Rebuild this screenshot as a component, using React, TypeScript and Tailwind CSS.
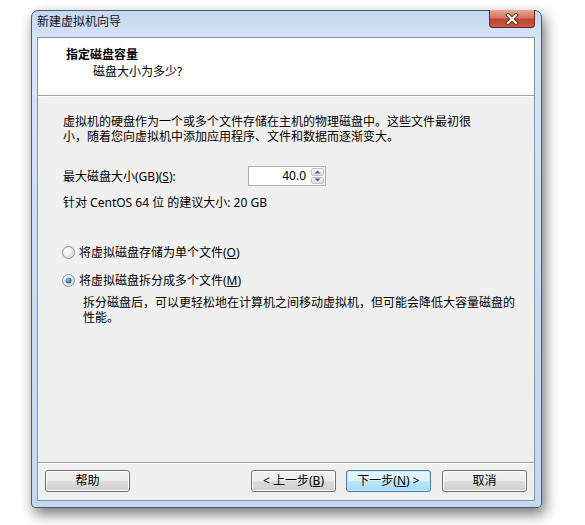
import React from "react";

const FONT = { fontFamily: '"Noto Sans", "Noto Sans CJK SC", sans-serif' };

function Btn({ children, primary }: { children: React.ReactNode; primary?: boolean }) {
  return (
    <button
      className={
        "w-[85px] h-[22px] rounded-[3px] border text-[12px] leading-[16px] text-black flex items-center justify-center " +
        (primary
          ? "border-[#3c7fb1] bg-[linear-gradient(to_bottom,#eaf6fd_0%,#d9f0fc_50%,#bee6fd_50%,#a7d9f5_100%)] shadow-[inset_0_0_0_1px_#cbe9fb]"
          : "border-[#707070] bg-[linear-gradient(to_bottom,#f2f2f2_0%,#ebebeb_50%,#dddddd_50%,#cfcfcf_100%)] shadow-[inset_0_0_0_1px_#fcfcfc]")
      }
    >
      {children}
    </button>
  );
}

function Radio({ checked }: { checked?: boolean }) {
  return (
    <svg width="13" height="13" viewBox="0 0 13 13" className="shrink-0">
      <defs>
        <radialGradient id="rb" cx="0.35" cy="0.35" r="0.8">
          <stop offset="0" stopColor="#ffffff" />
          <stop offset="1" stopColor="#d6d6d6" />
        </radialGradient>
        <radialGradient id="rd" cx="0.4" cy="0.35" r="0.7">
          <stop offset="0" stopColor="#8ad4f7" />
          <stop offset="0.6" stopColor="#2b7cc7" />
          <stop offset="1" stopColor="#1b4f8f" />
        </radialGradient>
      </defs>
      <circle cx="6.5" cy="6.5" r="6" fill="url(#rb)" stroke="#8e8f8f" strokeWidth="1" />
      {checked && <circle cx="6.5" cy="6.5" r="3" fill="url(#rd)" />}
    </svg>
  );
}

export default function App() {
  return (
    <div className="w-[585px] h-[525px] bg-white pt-[10px] overflow-hidden text-black" style={FONT}>
      <div className="ml-[31px] w-[511px] h-[498px] rounded-t-[7px] rounded-b-[4px] border border-[#4b5b6e] bg-[linear-gradient(to_bottom,#c3d7ef_0%,#d8e6f6_6%,#cadcf1_60%,#c4d8f0_100%)] pl-[5px] pr-[6px] pb-[6px] flex flex-col shadow-[3px_6px_14px_rgba(0,0,0,0.55)]">
        <div className="h-[26px] flex justify-between items-start shrink-0">
          <span className="mt-[3px] text-[12px] leading-[16px] text-[#111]">新建虚拟机向导</span>
          <div className="-mt-px w-[46px] h-[18px] rounded-b-[4px] border border-[#5b2a22] border-t-0 bg-[linear-gradient(to_bottom,#e8a595_0%,#d87563_45%,#c2432f_55%,#c95a45_100%)] flex items-center justify-center">
            <svg width="14" height="12" viewBox="0 0 14 12">
              <path d="M3 2 L11 10 M11 2 L3 10" stroke="#5a2a22" strokeWidth="4" strokeLinecap="square" />
              <path d="M3 2 L11 10 M11 2 L3 10" stroke="#ffffff" strokeWidth="2.2" strokeLinecap="square" />
            </svg>
          </div>
        </div>
        <div className="flex-1 border border-[#8395ab] bg-[#f0f0f0] flex flex-col min-h-0">
          <div className="h-[58px] bg-white border-b border-[#a0a0a0] pt-[9px] shrink-0">
            <div className="pl-[28px] text-[12px] leading-[16px] font-bold">指定磁盘容量</div>
            <div className="pl-[55px] mt-px text-[12px] leading-[16px]">磁盘大小为多少?</div>
          </div>
          <div className="flex-1 border-t border-white pl-[25px] pt-[17px] text-[12px] leading-[15px]">
            <p>虚拟机的硬盘作为一个或多个文件存储在主机的物理磁盘中。这些文件最初很</p>
            <p>小，随着您向虚拟机中添加应用程序、文件和数据而逐渐变大。</p>
            <div className="mt-[22px] flex items-center h-[20px]">
              <span className="w-[185px]">
                最大磁盘大小(GB)(<span className="underline">S</span>):
              </span>
              <div className="flex h-[20px] w-[78px] border border-[#abadb3] border-t-[#abadb3] bg-white">
                <span className="flex-1 text-right pr-[4px] leading-[18px]">40.0</span>
                <div className="w-[15px] flex flex-col gap-px p-px">
                  <div className="flex-1 border border-[#b8c4d3] rounded-[2px] bg-[linear-gradient(to_bottom,#f6f6f6,#dde1e6)] flex items-center justify-center">
                    <svg width="7" height="4" viewBox="0 0 7 4"><path d="M0.5 3.5 L3.5 0.5 L6.5 3.5 Z" fill="#4d6185" /></svg>
                  </div>
                  <div className="flex-1 border border-[#b8c4d3] rounded-[2px] bg-[linear-gradient(to_bottom,#f6f6f6,#dde1e6)] flex items-center justify-center">
                    <svg width="7" height="4" viewBox="0 0 7 4"><path d="M0.5 0.5 L3.5 3.5 L6.5 0.5 Z" fill="#4d6185" /></svg>
                  </div>
                </div>
              </div>
            </div>
            <p className="mt-[9px]">针对 CentOS 64 位 的建议大小: 20 GB</p>
            <div className="mt-[35px] flex items-center gap-[4px] -ml-[1px]">
              <Radio />
              <span>
                将虚拟磁盘存储为单个文件(<span className="underline">O</span>)
              </span>
            </div>
            <div className="mt-[13px] flex items-center gap-[4px] -ml-[1px]">
              <Radio checked />
              <span>
                将虚拟磁盘拆分成多个文件(<span className="underline">M</span>)
              </span>
            </div>
            <div className="mt-[7px] pl-[20px]">
              <p>拆分磁盘后，可以更轻松地在计算机之间移动虚拟机，但可能会降低大容量磁盘的</p>
              <p>性能。</p>
            </div>
          </div>
          <div className="h-[38px] shrink-0 border-t border-[#a0a0a0] shadow-[inset_0_1px_0_#ffffff] pt-[7px] pl-[7px] pr-[7px] flex">
            <Btn>帮助</Btn>
            <div className="flex-1" />
            <Btn>
              &lt; 上一步(<span className="underline">B</span>)
            </Btn>
            <div className="w-[10px]" />
            <Btn primary>
              下一步(<span className="underline">N</span>) &gt;
            </Btn>
            <div className="w-[11px]" />
            <Btn>取消</Btn>
          </div>
        </div>
      </div>
    </div>
  );
}
